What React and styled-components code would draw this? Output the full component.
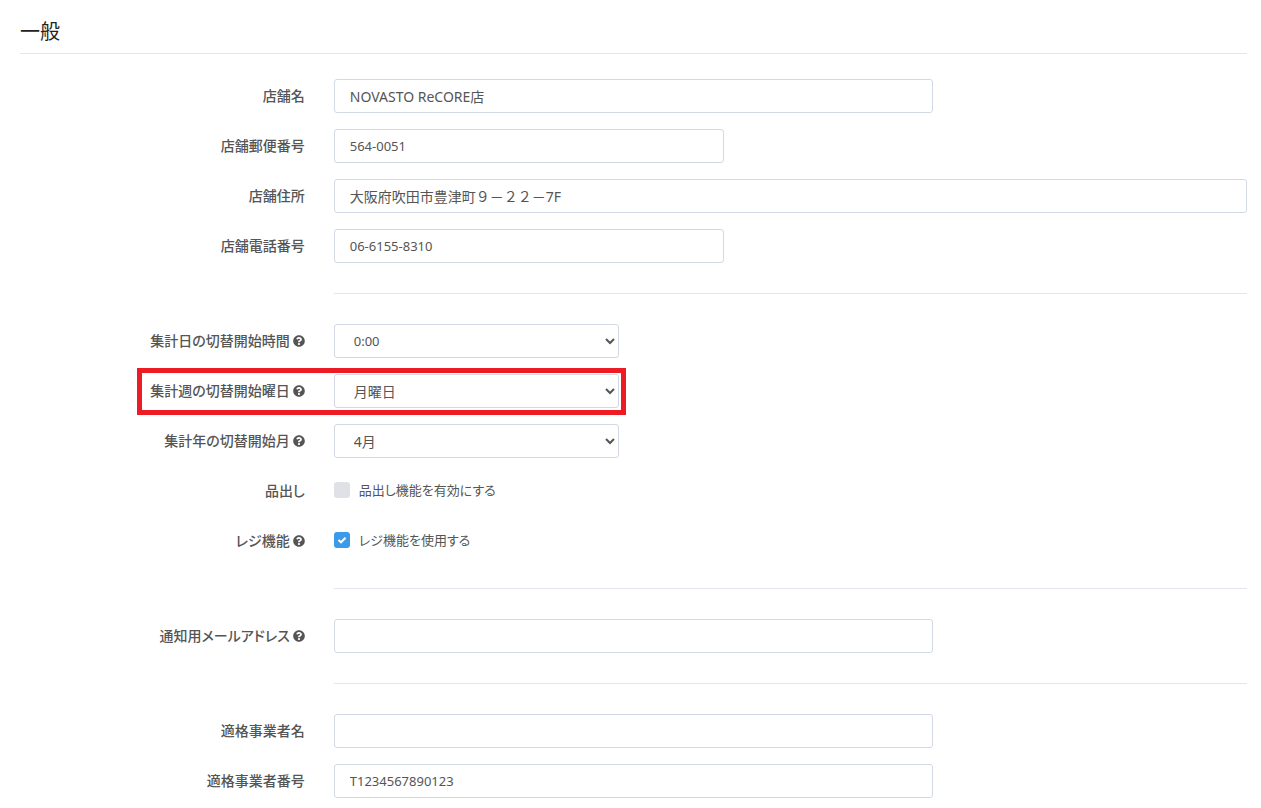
import React, { useState } from 'react';
import styled, { createGlobalStyle } from 'styled-components';
import { FaQuestionCircle } from 'react-icons/fa';

const GlobalStyle = createGlobalStyle`
  body {
    margin: 0;
    background: #fff;
    color: #555;
    font-family: 'Noto Sans', 'Noto Sans CJK JP', sans-serif;
    font-size: 14px;
    line-height: 20px;
  }

  *, *::before, *::after {
    box-sizing: border-box;
  }
`;

const Page = styled.main`
  padding: 19px 14px 0 20px;
`;

const Title = styled.h1`
  margin: 0 0 25px;
  padding-bottom: 8px;
  border-bottom: 1px solid #e3e6ee;
  color: #222;
  font-size: 20px;
  font-weight: 400;
  line-height: 26px;
`;

const Form = styled.form`
  display: flex;
  flex-direction: column;
  gap: 16px;
  margin: 0 -14px;
`;

const Row = styled.div`
  position: relative;
  display: grid;
  grid-template-columns: 3fr 9fr;
  min-height: 34px;
`;

const Label = styled.label`
  display: flex;
  justify-content: flex-end;
  align-items: center;
  gap: 3px;
  padding: 0 15px 0 14px;
  font-weight: 500;
  font-feature-settings: 'palt';
`;

/* span is the number of columns taken out of the nine on the right */
const Field = styled.div`
  display: flex;
  align-items: center;
  width: calc(100% * ${({ $span }) => $span || 9} / 9);
  padding: 0 14px;
`;

const Input = styled.input`
  width: 100%;
  height: 34px;
  padding: 0 15px;
  border: 1px solid #d2d8e4;
  border-radius: 3px;
  background: #fff;
  color: #555;
  font-family: inherit;
  font-size: ${({ $small }) => ($small ? '13px' : '14px')};

  &:focus {
    outline: none;
    border-color: #3c9be8;
  }
`;

const Select = styled.select`
  width: 100%;
  height: 34px;
  padding: 0 0 0 15px;
  border: 1px solid #d2d8e4;
  border-radius: 3px;
  background: #fff;
  color: #555;
  font-family: inherit;
  font-size: ${({ $small }) => ($small ? '13px' : '14px')};
`;

const Divider = styled.hr`
  width: calc(75% - 28px);
  margin: 14px 14px 14px auto;
  border: 0;
  border-top: 1px solid #e3e6ee;
`;

const CheckLabel = styled.label`
  display: flex;
  align-items: center;
  gap: 9px;
  padding-bottom: 2px;
  font-size: 13px;
  font-feature-settings: 'palt';
`;

const CheckBox = styled.span`
  display: grid;
  width: 16px;
  height: 16px;

  input,
  svg {
    grid-area: 1 / 1;
  }

  input {
    appearance: none;
    width: 16px;
    height: 16px;
    margin: 0;
    border-radius: 3px;
    background: #dee2e6;
  }

  input:checked {
    background: #3c9be8;
  }

  svg {
    place-self: center;
    pointer-events: none;
  }
`;

const Highlight = styled.div`
  position: absolute;
  top: -6px;
  bottom: -7px;
  left: calc(25% - 183px);
  right: calc(50% + 8px);
  border: 5px solid #ed1c24;
  pointer-events: none;
`;

function FormRow({ id, label, help, span, highlight, children }) {
  return (
    <Row>
      <Label htmlFor={id}>
        {label}
        {help && <FaQuestionCircle size={12} />}
      </Label>
      <Field $span={span}>{children}</Field>
      {highlight && <Highlight />}
    </Row>
  );
}

function Check({ id, children, defaultChecked }) {
  const [checked, setChecked] = useState(!!defaultChecked);

  return (
    <CheckLabel>
      <CheckBox>
        <input
          id={id}
          type="checkbox"
          checked={checked}
          onChange={e => setChecked(e.target.checked)}
        />
        {checked && (
          <svg width="10" height="10" viewBox="0 0 10 10" fill="none" stroke="#fff" strokeWidth="2">
            <path d="M1.5 5 4 7.3 8.5 2.8" />
          </svg>
        )}
      </CheckBox>
      {children}
    </CheckLabel>
  );
}

function App() {
  return (
    <>
      <GlobalStyle />
      <Page>
        <Title>一般</Title>
        <Form>
          <FormRow id="name" label="店舗名" span={6}>
            <Input id="name" defaultValue="NOVASTO ReCORE店" />
          </FormRow>
          <FormRow id="zip" label="店舗郵便番号" span={4}>
            <Input id="zip" $small defaultValue="564-0051" />
          </FormRow>
          <FormRow id="address" label="店舗住所">
            <Input id="address" defaultValue="大阪府吹田市豊津町９－２２－7F" />
          </FormRow>
          <FormRow id="tel" label="店舗電話番号" span={4}>
            <Input id="tel" $small defaultValue="06-6155-8310" />
          </FormRow>

          <Divider />

          <FormRow id="day" label="集計日の切替開始時間" help span={3}>
            <Select id="day" $small>
              <option>0:00</option>
            </Select>
          </FormRow>
          <FormRow id="week" label="集計週の切替開始曜日" help span={3} highlight>
            <Select id="week">
              <option>月曜日</option>
            </Select>
          </FormRow>
          <FormRow id="month" label="集計年の切替開始月" help span={3}>
            <Select id="month">
              <option>4月</option>
            </Select>
          </FormRow>
          <FormRow id="stocking" label="品出し">
            <Check id="stocking">品出し機能を有効にする</Check>
          </FormRow>
          <FormRow id="register" label="レジ機能" help>
            <Check id="register" defaultChecked>レジ機能を使用する</Check>
          </FormRow>

          <Divider />

          <FormRow id="mail" label="通知用メールアドレス" help span={6}>
            <Input id="mail" type="email" />
          </FormRow>

          <Divider />

          <FormRow id="company" label="適格事業者名" span={6}>
            <Input id="company" />
          </FormRow>
          <FormRow id="number" label="適格事業者番号" span={6}>
            <Input id="number" $small defaultValue="T1234567890123" />
          </FormRow>
        </Form>
      </Page>
    </>
  );
}

export default App;
